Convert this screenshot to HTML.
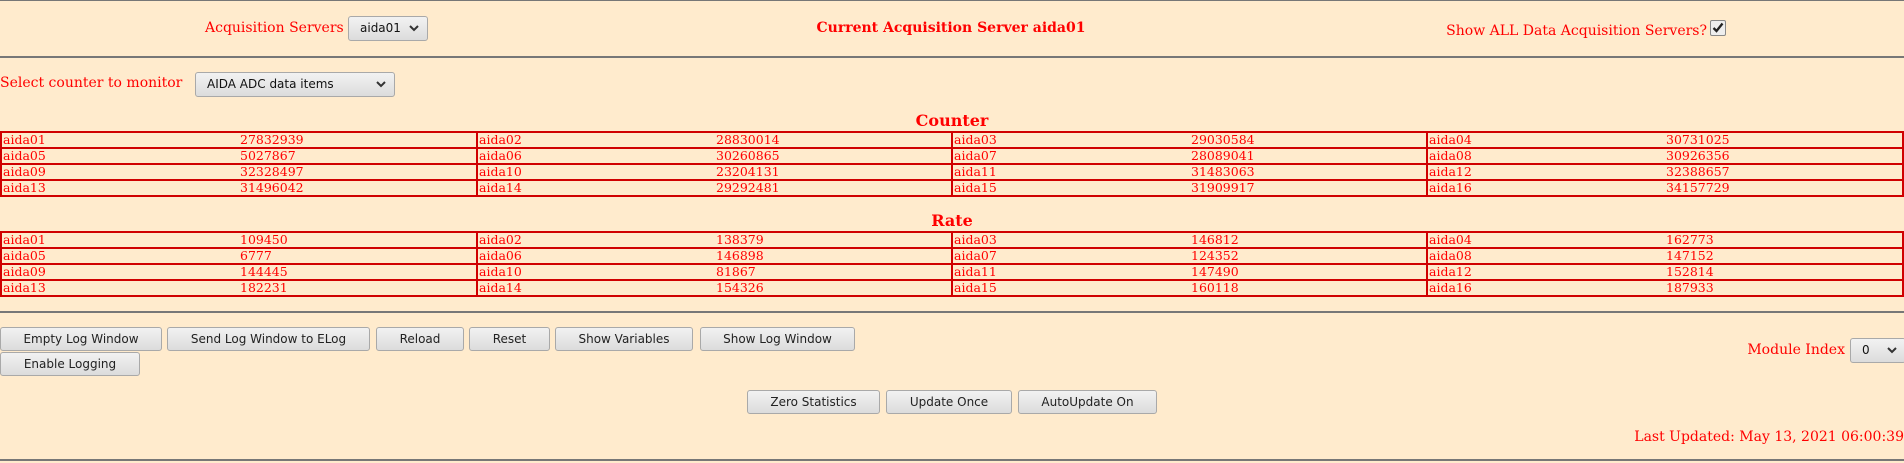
<!DOCTYPE html>
<html><head><meta charset="utf-8"><style>
body{margin:0;width:1904px;height:463px;background:#ffebcd;position:relative;overflow:hidden;font-family:"DejaVu Serif","Liberation Serif",serif;color:#f00}
.a{position:absolute;white-space:nowrap}
.hr{position:absolute;left:0;width:1904px;height:2px;background:#777}
.lbl{font-size:14px;line-height:16px}
.btn{position:absolute;box-sizing:border-box;border:1px solid #a9a9a9;border-radius:3px;background:linear-gradient(#f2f2f2,#dcdcdc);font-family:"DejaVu Sans",sans-serif;font-size:12px;color:#222;text-align:center;line-height:22px}
.sel{position:absolute;box-sizing:border-box;border:1px solid #a9a9a9;border-radius:3px;background:linear-gradient(#f2f2f2,#dcdcdc);font-family:"DejaVu Sans",sans-serif;font-size:12px;color:#111;line-height:23px;padding-left:11px}
.sel svg{position:absolute;right:8px;top:8px}
.tbl{position:absolute;left:0;width:1904px}
.row{height:14px;border:2px solid #d00000;border-top:none;box-sizing:content-box;display:flex;width:1900px}
.row:first-child{border-top:2px solid #d00000}
.c{width:475px;height:14px;position:relative;font-size:12.5px;line-height:14px;border-left:2px solid #d00000;box-sizing:border-box}
.c:first-child{border-left:none;width:474px}
.c span{position:absolute;left:1px}
.c span+span{left:238px}
h3{position:absolute;margin:0;width:1904px;text-align:center;font-size:16px;line-height:20px}
</style></head><body>
<div class="hr" style="top:0;height:1px"></div>
<div class="a lbl" style="left:205px;top:20px">Acquisition Servers</div>
<div class="sel" style="left:348px;top:16px;width:80px;height:25px">aida01<svg width="10" height="7"><path d="M1 1l4 4 4-4" stroke="#333" stroke-width="2" fill="none"/></svg></div>
<div class="a lbl" style="left:751px;width:400px;text-align:center;top:20px;font-weight:bold">Current Acquisition Server aida01</div>
<div class="a lbl" style="right:197px;top:23px">Show ALL Data Acquisition Servers?</div>
<div class="a" style="left:1710px;top:20px;width:14px;height:14px;border:1px solid #888;border-radius:2px;background:#eee"><svg width="14" height="14" style="position:absolute;left:0;top:0"><path d="M2.5 7l3 3 6-7.5" stroke="#222" stroke-width="2.3" fill="none"/></svg></div>
<div class="hr" style="top:56px"></div>
<div class="a lbl" style="left:0;top:75px">Select counter to monitor</div>
<div class="sel" style="left:195px;top:72px;width:200px;height:25px">AIDA ADC data items<svg width="10" height="7"><path d="M1 1l4 4 4-4" stroke="#333" stroke-width="2" fill="none"/></svg></div>
<h3 style="top:111px">Counter</h3>
<div class="tbl" style="top:131px">
<div class="row"><div class="c"><span>aida01</span><span>27832939</span></div><div class="c"><span>aida02</span><span>28830014</span></div><div class="c"><span>aida03</span><span>29030584</span></div><div class="c"><span>aida04</span><span>30731025</span></div></div>
<div class="row"><div class="c"><span>aida05</span><span>5027867</span></div><div class="c"><span>aida06</span><span>30260865</span></div><div class="c"><span>aida07</span><span>28089041</span></div><div class="c"><span>aida08</span><span>30926356</span></div></div>
<div class="row"><div class="c"><span>aida09</span><span>32328497</span></div><div class="c"><span>aida10</span><span>23204131</span></div><div class="c"><span>aida11</span><span>31483063</span></div><div class="c"><span>aida12</span><span>32388657</span></div></div>
<div class="row"><div class="c"><span>aida13</span><span>31496042</span></div><div class="c"><span>aida14</span><span>29292481</span></div><div class="c"><span>aida15</span><span>31909917</span></div><div class="c"><span>aida16</span><span>34157729</span></div></div>
</div>
<h3 style="top:211px">Rate</h3>
<div class="tbl" style="top:231px">
<div class="row"><div class="c"><span>aida01</span><span>109450</span></div><div class="c"><span>aida02</span><span>138379</span></div><div class="c"><span>aida03</span><span>146812</span></div><div class="c"><span>aida04</span><span>162773</span></div></div>
<div class="row"><div class="c"><span>aida05</span><span>6777</span></div><div class="c"><span>aida06</span><span>146898</span></div><div class="c"><span>aida07</span><span>124352</span></div><div class="c"><span>aida08</span><span>147152</span></div></div>
<div class="row"><div class="c"><span>aida09</span><span>144445</span></div><div class="c"><span>aida10</span><span>81867</span></div><div class="c"><span>aida11</span><span>147490</span></div><div class="c"><span>aida12</span><span>152814</span></div></div>
<div class="row"><div class="c"><span>aida13</span><span>182231</span></div><div class="c"><span>aida14</span><span>154326</span></div><div class="c"><span>aida15</span><span>160118</span></div><div class="c"><span>aida16</span><span>187933</span></div></div>
</div>
<div class="hr" style="top:311px"></div>
<div class="btn" style="left:0;top:327px;width:162px;height:24px">Empty Log Window</div>
<div class="btn" style="left:167px;top:327px;width:203px;height:24px">Send Log Window to ELog</div>
<div class="btn" style="left:376px;top:327px;width:88px;height:24px">Reload</div>
<div class="btn" style="left:469px;top:327px;width:81px;height:24px">Reset</div>
<div class="btn" style="left:555px;top:327px;width:138px;height:24px">Show Variables</div>
<div class="btn" style="left:700px;top:327px;width:155px;height:24px">Show Log Window</div>
<div class="btn" style="left:0;top:352px;width:140px;height:24px">Enable Logging</div>
<div class="a lbl" style="right:59px;top:342px">Module Index</div>
<div class="sel" style="left:1850px;top:338px;width:56px;height:25px">0<svg width="10" height="7"><path d="M1 1l4 4 4-4" stroke="#333" stroke-width="2" fill="none"/></svg></div>
<div class="btn" style="left:747px;top:390px;width:133px;height:24px">Zero Statistics</div>
<div class="btn" style="left:886px;top:390px;width:126px;height:24px">Update Once</div>
<div class="btn" style="left:1018px;top:390px;width:139px;height:24px">AutoUpdate On</div>
<div class="a lbl" style="right:0;top:429px">Last Updated: May 13, 2021 06:00:39</div>
<div class="hr" style="top:459px"></div>
</body></html>
